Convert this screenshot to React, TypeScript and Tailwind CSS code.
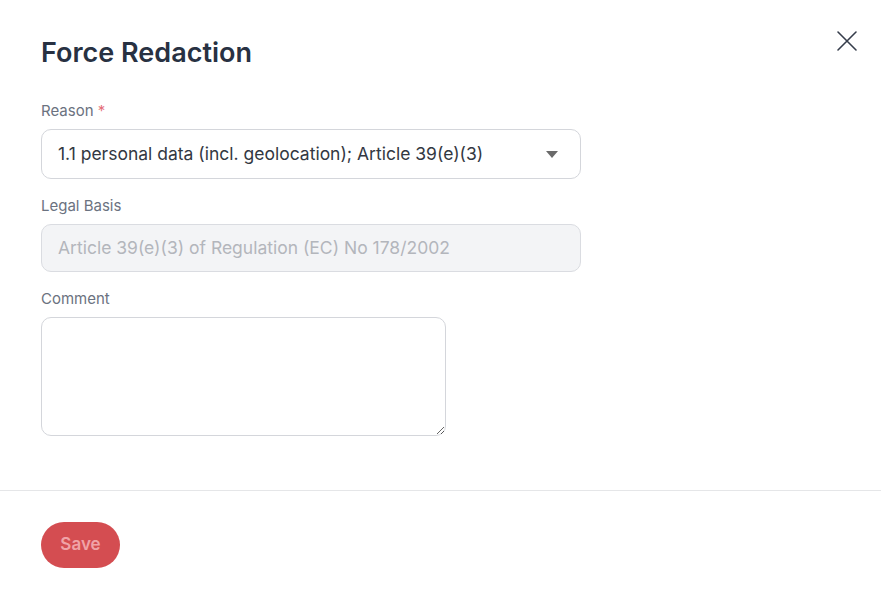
export default function App() {
  return (
    <div
      className="relative w-[881px] h-[598px] bg-white overflow-hidden"
      style={{ fontFamily: 'Inter, "Noto Sans", sans-serif' }}
    >
      {/* close */}
      <button className="absolute left-[836px] top-[30px] w-[22px] h-[22px] text-[#363d4b]">
        <svg viewBox="0 0 22 22" width="22" height="22" fill="none" stroke="currentColor" strokeWidth="1.6" strokeLinecap="round">
          <path d="M2 2 L20 20 M20 2 L2 20" />
        </svg>
      </button>

      <div className="px-[41px] pt-[35px]">
        <h1 className="text-[27px] leading-[36px] font-semibold text-[#283142]">Force Redaction</h1>

        <div className="mt-[30px] w-[540px]">
          <label className="block text-[15px] leading-[20px] text-[#6b7280]">
            Reason <span className="text-[#e5707a]">*</span>
          </label>
          <div className="mt-[8px] h-[50px] rounded-[10px] border border-[#d4d6db] flex items-center justify-between pl-[16px] pr-[22px]">
            <span className="text-[17.5px] text-[#333842]">1.1 personal data (incl. geolocation); Article 39(e)(3)</span>
            <svg width="12" height="7" viewBox="0 0 12 7">
              <path d="M0 0 H12 L6 7 Z" fill="#6a6a6a" />
            </svg>
          </div>

          <label className="block mt-[17px] text-[15px] leading-[20px] text-[#6b7280]">Legal Basis</label>
          <div className="mt-[8px] h-[48px] rounded-[10px] border border-[#dadce1] bg-[#f3f4f6] flex items-center pl-[16px]">
            <span className="text-[17.5px] text-[#b3b6bc]">Article 39(e)(3) of Regulation (EC) No 178/2002</span>
          </div>

          <label className="block mt-[17px] text-[15px] leading-[20px] text-[#6b7280]">Comment</label>
          <textarea className="block mt-[8px] w-[405px] h-[119px] rounded-[10px] border border-[#d4d6db] outline-none p-3 text-[16px]" />
        </div>
      </div>

      <div className="mt-[54px] border-t border-[#e5e6e8]" />

      <div className="px-[41px] pt-[31px]">
        <button className="h-[46px] w-[79px] rounded-full bg-[#d44d51] text-[#f0a3a7] text-[17px] font-semibold">
          Save
        </button>
      </div>
    </div>
  );
}
